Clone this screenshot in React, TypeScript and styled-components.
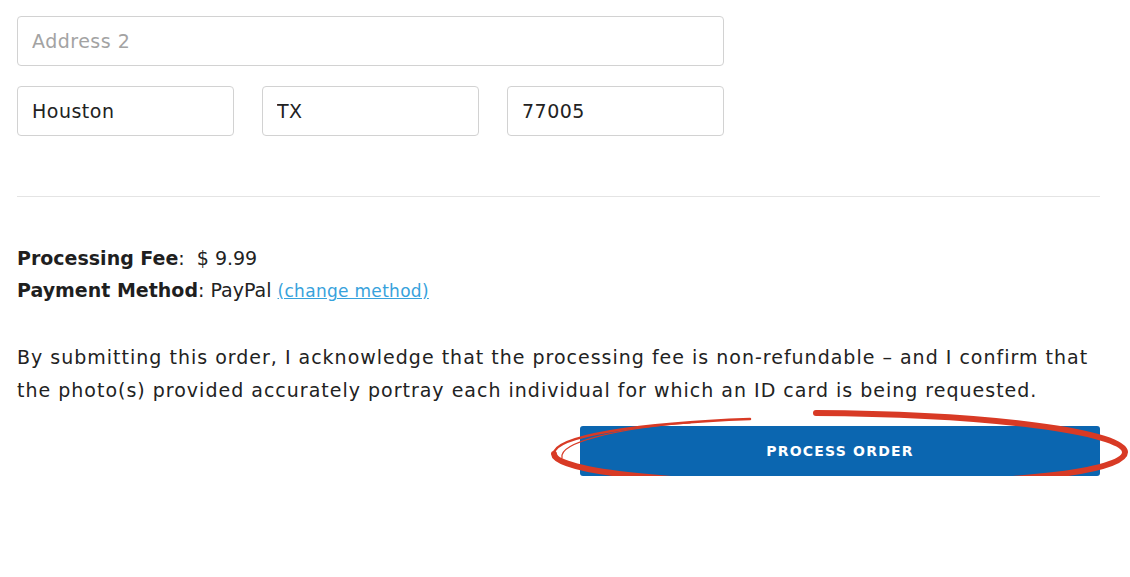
import React from 'react'
import styled, { createGlobalStyle } from 'styled-components'

const GlobalStyle = createGlobalStyle`
  html, body {
    margin: 0;
    padding: 0;
    background: #ffffff;
  }
  body {
    font-family: 'DejaVu Sans', Inter, sans-serif;
    color: #222222;
  }
`

const Page = styled.div`
  width: 1083px;
  padding: 16px 0 0 17px;
  display: flex;
  flex-direction: column;
`

const AddressBlock = styled.div`
  width: 707px;
  display: flex;
  flex-direction: column;
  gap: 20px;
`

const CityRow = styled.div`
  display: grid;
  grid-template-columns: repeat(3, 1fr);
  gap: 28px;
`

const Field = styled.input`
  box-sizing: border-box;
  width: 100%;
  height: 50px;
  padding: 0 14px;
  border: 1px solid #d2d2d2;
  border-radius: 4px;
  font-family: inherit;
  font-size: 19px;
  letter-spacing: 0.5px;
  color: #222222;
  background: #ffffff;
  outline: none;

  &::placeholder {
    color: #a3a3a3;
  }
`

const Divider = styled.hr`
  width: 100%;
  margin: 60px 0 0;
  border: none;
  border-top: 1px solid #e4e4e4;
`

const Summary = styled.div`
  margin-top: 45px;
  display: flex;
  flex-direction: column;
  font-size: 19px;
  line-height: 32px;
`

const Label = styled.strong`
  font-weight: 700;
  color: #1f1f1f;
`

const Value = styled.span<{ $gap?: number }>`
  margin-left: ${(p) => p.$gap ?? 0}px;
`

const Link = styled.a`
  color: #37a2dc;
  text-decoration: underline;
  font-size: 17px;
  letter-spacing: 0.3px;
  cursor: pointer;
`

const Notice = styled.p`
  margin: 34px 0 0;
  font-size: 19px;
  line-height: 33px;
  letter-spacing: 1px;
  color: #222222;
`

const ActionRow = styled.div`
  margin-top: 19px;
  display: flex;
  justify-content: flex-end;
`

const ButtonWrap = styled.div`
  position: relative;
  width: 520px;
  height: 50px;
`

const SubmitButton = styled.button`
  display: block;
  width: 100%;
  height: 50px;
  border: none;
  border-radius: 3px;
  background: #0b66b0;
  color: #ffffff;
  font-family: inherit;
  font-size: 14px;
  font-weight: 700;
  letter-spacing: 1.2px;
  cursor: pointer;
`

const Scribble = styled.svg`
  position: absolute;
  left: -30px;
  top: -18px;
  width: 580px;
  height: 86px;
  overflow: visible;
  pointer-events: none;
`

// hand-drawn red ring around the submit button
const CircleMark = () => (
  <Scribble viewBox="-30 -18 580 86">
    <path
      d="M 236 -13 C 410 -12, 544 6, 545 26 C 546 46, 430 58.5, 262 58.5 C 100 58.5, -25 46, -26 28"
      fill="none"
      stroke="#d83a25"
      strokeWidth={6}
      strokeLinecap="round"
    />
    <path
      d="M 420 54.5 C 370 57.5, 320 58.5, 262 58.5 C 200 58.5, 150 57.5, 110 55.5"
      fill="none"
      stroke="#d83a25"
      strokeWidth={8}
      strokeLinecap="round"
    />
    <path
      d="M -26 28 C -27 10, 60 -3, 170 -7"
      fill="none"
      stroke="#d83a25"
      strokeWidth={2.5}
      strokeLinecap="round"
    />
    <path
      d="M -18 32 C -22 16, 40 2, 110 -3"
      fill="none"
      stroke="#d83a25"
      strokeWidth={1.2}
      strokeLinecap="round"
    />
  </Scribble>
)

export default function App() {
  return (
    <>
      <GlobalStyle />
      <Page>
        <AddressBlock>
          <Field placeholder="Address 2" />
          <CityRow>
            <Field defaultValue="Houston" />
            <Field defaultValue="TX" />
            <Field defaultValue="77005" />
          </CityRow>
        </AddressBlock>

        <Divider />

        <Summary>
          <div>
            <Label>Processing Fee</Label>:<Value $gap={12}>$ 9.99</Value>
          </div>
          <div>
            <Label>Payment Method</Label>: PayPal <Link>(change method)</Link>
          </div>
        </Summary>

        <Notice>
          By submitting this order, I acknowledge that the processing fee is non-refundable – and I confirm that
          the photo(s) provided accurately portray each individual for which an ID card is being requested.
        </Notice>

        <ActionRow>
          <ButtonWrap>
            <SubmitButton>PROCESS ORDER</SubmitButton>
            <CircleMark />
          </ButtonWrap>
        </ActionRow>
      </Page>
    </>
  )
}
